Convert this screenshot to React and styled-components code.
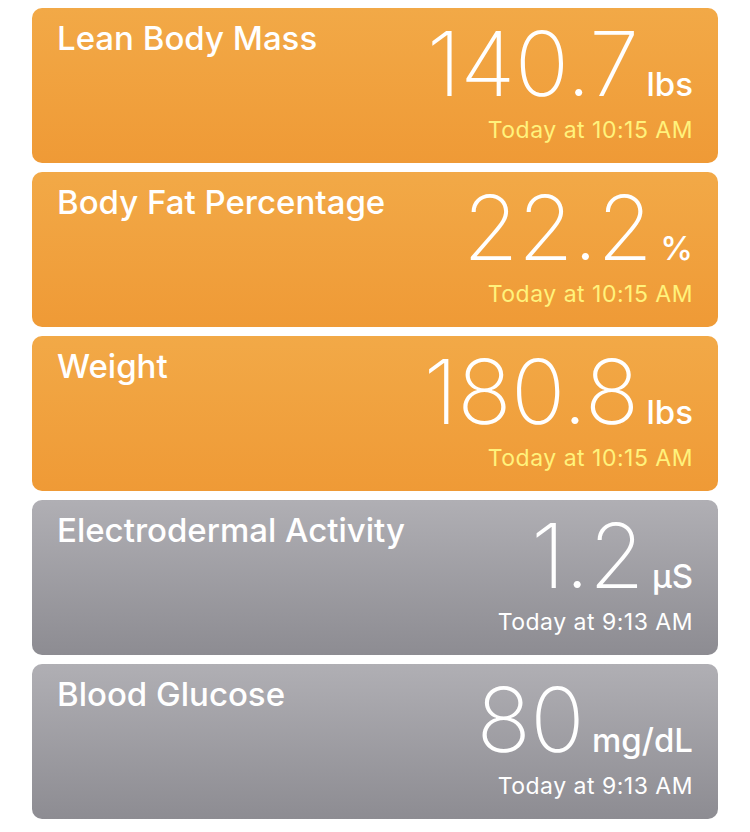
import React from "react";
import styled, { createGlobalStyle } from "styled-components";

const GlobalStyle = createGlobalStyle`
  body {
    margin: 0;
    background: #ffffff;
    font-family: Inter, "Liberation Sans", sans-serif;
  }
`;

const List = styled.div`
  display: flex;
  flex-direction: column;
  gap: 9px;
  padding: 8px 32px;
`;

const Card = styled.div`
  display: flex;
  justify-content: space-between;
  height: 155px;
  box-sizing: border-box;
  padding: 0 25px;
  border-radius: 10px;
  color: #ffffff;
  background: ${(p) =>
    p.$tone === "gray"
      ? "linear-gradient(180deg, #b0afb4 0%, #8d8c92 100%)"
      : "linear-gradient(180deg, #f2a947 0%, #ef9a36 100%)"};
`;

const Title = styled.div`
  margin-top: 14px;
  font-size: 33px;
  line-height: 33px;
  font-weight: 500;
  white-space: nowrap;
`;

const Reading = styled.div`
  display: flex;
  flex-direction: column;
  align-items: flex-end;
  padding-top: 11px;
`;

const ValueRow = styled.div`
  display: flex;
  align-items: baseline;
`;

const Number = styled.span`
  font-size: 90px;
  line-height: 90px;
  font-weight: 200;
  letter-spacing: -0.6px;
`;

const Unit = styled.span`
  margin-left: 8px;
  font-size: 33px;
  line-height: 33px;
  font-weight: 500;
`;

const Stamp = styled.div`
  margin-top: 10px;
  font-size: 23px;
  line-height: 23px;
  letter-spacing: 0.5px;
  color: ${(p) => (p.$tone === "gray" ? "#ffffff" : "#fff27c")};
`;

const readings = [
  { title: "Lean Body Mass", value: "140.7", unit: "lbs", time: "Today at 10:15 AM", tone: "orange" },
  { title: "Body Fat Percentage", value: "22.2", unit: "%", time: "Today at 10:15 AM", tone: "orange" },
  { title: "Weight", value: "180.8", unit: "lbs", time: "Today at 10:15 AM", tone: "orange" },
  { title: "Electrodermal Activity", value: "1.2", unit: "µS", time: "Today at 9:13 AM", tone: "gray" },
  { title: "Blood Glucose", value: "80", unit: "mg/dL", time: "Today at 9:13 AM", tone: "gray" },
];

const App = () => {
  return (
    <>
      <GlobalStyle />
      <List>
        {readings.map((r) => (
          <Card key={r.title} $tone={r.tone}>
            <Title>{r.title}</Title>
            <Reading>
              <ValueRow>
                <Number>{r.value}</Number>
                <Unit>{r.unit}</Unit>
              </ValueRow>
              <Stamp $tone={r.tone}>{r.time}</Stamp>
            </Reading>
          </Card>
        ))}
      </List>
    </>
  );
};

export default App;
